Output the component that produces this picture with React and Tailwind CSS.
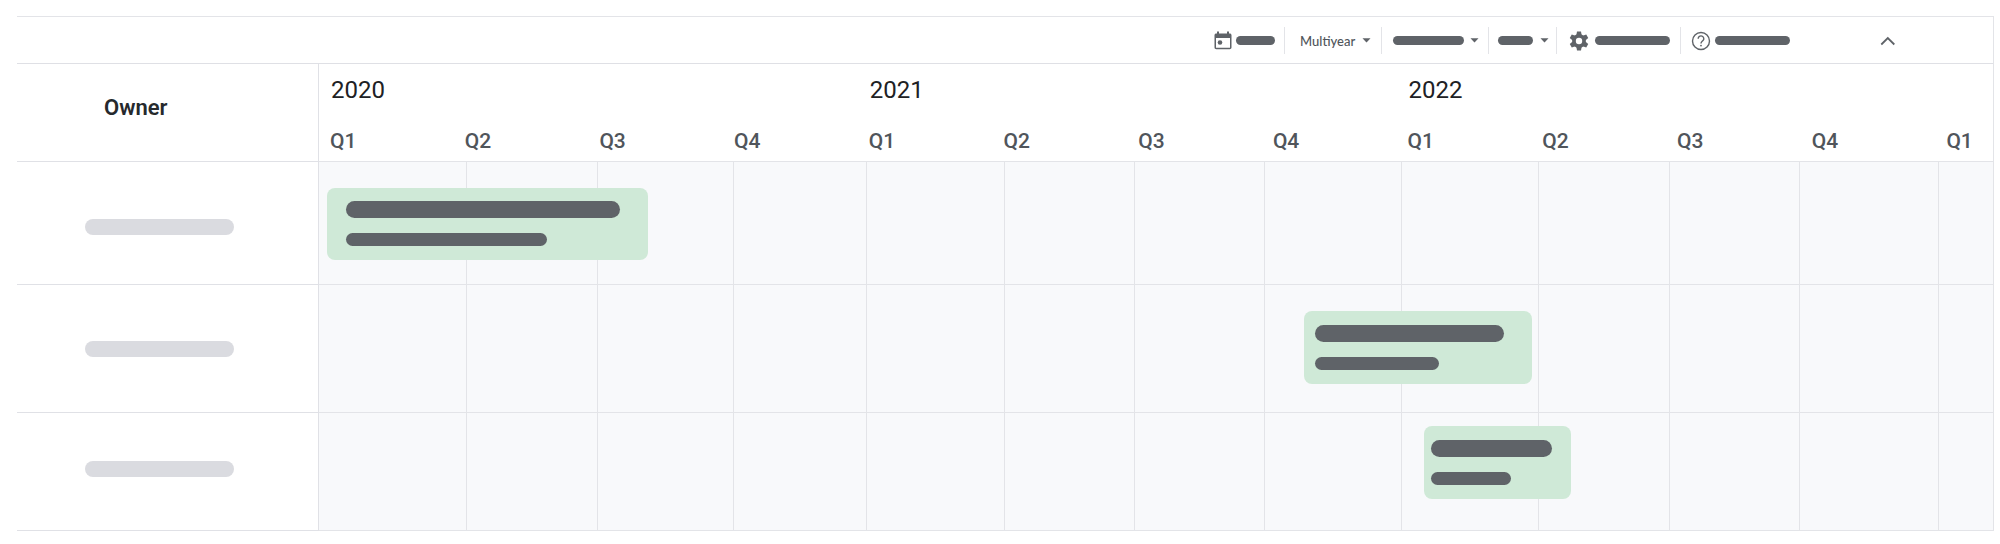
import React, { useState } from "react";

const TIMELINE_WIDTH = 1674;

const quarters = ["Q1", "Q2", "Q3", "Q4", "Q1", "Q2", "Q3", "Q4", "Q1", "Q2", "Q3", "Q4", "Q1"];

// start and length are in timeline units, see TIMELINE_WIDTH
const rows = [
  {
    id: 1,
    height: "h-[122px]",
    ownerPad: "pt-[57px]",
    bar: { start: 8, length: 321, className: "top-[26px] h-[72px] pt-[13px] pl-[19px]", title: "w-[274px]", detail: "w-[201px]" },
  },
  {
    id: 2,
    height: "h-[127px]",
    ownerPad: "pt-[56px]",
    bar: { start: 985, length: 228, className: "top-[26px] h-[73px] pt-3.5 pl-[11px]", title: "w-[189px]", detail: "w-[124px]" },
  },
  {
    id: 3,
    height: "h-[117px]",
    ownerPad: "pt-[48px]",
    bar: { start: 1105, length: 147, className: "top-[13px] h-[73px] pt-3.5 pl-[7px]", title: "w-[121px]", detail: "w-[80px]" },
  },
];

const toPercent = (value) => `${(value / TIMELINE_WIDTH) * 100}%`;

const Caret = () => (
  <svg className="w-[9px] h-[5px] shrink-0 pointer-events-none" viewBox="0 0 9 5" fill="#5f6368">
    <path d="M0.5 0.3h8L4.5 4.5z" />
  </svg>
);

const CalendarIcon = () => (
  <svg className="size-[22px] shrink-0" viewBox="0 0 22 22" fill="#5f6368">
    <path
      fillRule="evenodd"
      d="M5 1.500h2v2h8v-2h2v2h.7c1 0 1.800.7 1.800 1.600v12.400c0 1-.8 1.700-1.800 1.700H4.300c-1 0-1.800-.7-1.800-1.700V5.100c0-.9.8-1.600 1.800-1.600H5zM4 8v9.700h14V8z"
    />
    <circle cx="8" cy="12.500" r="2.300" />
  </svg>
);

const GearIcon = () => (
  <svg className="size-[22px] shrink-0" viewBox="0 0 22 22">
    <g fill="#5f6368">
      <circle cx="11" cy="11" r="6.900" />
      <path d="M9 1.500h4l.8 4.500H8.200zM9 20.500h4l.8-4.500H8.200z" />
      <path d="M9 1.500h4l.8 4.500H8.200zM9 20.500h4l.8-4.500H8.200z" transform="rotate(60 11 11)" />
      <path d="M9 1.500h4l.8 4.500H8.200zM9 20.500h4l.8-4.500H8.200z" transform="rotate(120 11 11)" />
    </g>
    <circle cx="11" cy="11" r="3.200" fill="#fff" />
  </svg>
);

const HelpIcon = () => (
  <svg className="size-[22px] shrink-0" viewBox="0 0 22 22" fill="none" stroke="#5f6368" strokeWidth="1.400">
    <circle cx="11" cy="11" r="8.500" />
    <path d="M8.200 8.700a2.800 2.700 0 1 1 4.800 1.800c-.9.9-2 1.400-2 3.100" />
    <circle cx="11" cy="15.600" r="0.900" fill="#5f6368" stroke="none" />
  </svg>
);

const Toolbar = () => {
  const [zoom, setZoom] = useState("multiyear");

  return (
    <div className="flex items-center justify-end h-[46px] pt-px pr-[93px]">
      <button aria-label="Today" className="flex items-center h-[27px] gap-0.5 pr-[9px] border-r border-[#e3e4e8]">
        <CalendarIcon />
        <span className="h-[9px] w-[39px] rounded-full bg-[#5f6368]" />
      </button>
      <div className="flex items-center h-[27px] gap-1.5 pl-[15px] pr-2.5 border-r border-[#e3e4e8]">
        <select
          aria-label="Zoom level"
          className="appearance-none bg-transparent font-[Lato,sans-serif] text-[13px] leading-5 font-medium text-[#50555b]"
          value={zoom}
          onChange={(e) => setZoom(e.target.value)}
        >
          <option value="multiyear">Multiyear</option>
        </select>
        <Caret />
      </div>
      <button aria-label="Group by" aria-haspopup="menu" className="flex items-center h-[27px] gap-1.5 pl-[11px] pr-[9px] border-r border-[#e3e4e8]">
        <span className="h-[9px] w-[71px] rounded-full bg-[#5f6368]" />
        <Caret />
      </button>
      <button aria-label="View" aria-haspopup="menu" className="flex items-center h-[27px] gap-[7px] pl-[9px] pr-[7px] border-r border-[#e3e4e8]">
        <span className="h-[9px] w-[35px] rounded-full bg-[#5f6368]" />
        <Caret />
      </button>
      <button aria-label="Settings" className="flex items-center h-[27px] gap-[5px] pl-[11px] pr-2.5 border-r border-[#e3e4e8]">
        <GearIcon />
        <span className="h-[9px] w-[75px] rounded-full bg-[#5f6368]" />
      </button>
      <button aria-label="Help" className="flex items-center h-[27px] gap-[3px] pl-[9px]">
        <HelpIcon />
        <span className="h-[9px] w-[75px] rounded-full bg-[#5f6368]" />
      </button>
      <button aria-label="Collapse" className="ml-[86px]">
        <svg className="size-6" viewBox="0 0 24 24" fill="none" stroke="#5f6368" strokeWidth="1.800">
          <path d="M5.300 15.500 11.800 9l6.500 6.500" />
        </svg>
      </button>
    </div>
  );
};

const TimelineHeader = () => (
  <div className="pt-3 pb-1.5">
    <div className="grid grid-cols-[repeat(12,1347fr)_576fr] text-2xl leading-7 font-normal text-[#202124]">
      <span className="col-span-4 pl-3">2020</span>
      <span className="col-span-4 pl-3">2021</span>
      <span className="col-span-4 pl-3">2022</span>
    </div>
    <div className="grid grid-cols-[repeat(12,1347fr)_576fr] mt-[23px] text-[21px] leading-7 font-medium text-[#50555b]">
      {quarters.map((quarter, i) => (
        <span key={i} className="pl-[11px]">
          {quarter}
        </span>
      ))}
    </div>
  </div>
);

const TimelineRow = ({ row }) => (
  <div className={`relative ${row.height}`}>
    <div className="grid h-full grid-cols-[148fr_131fr_136fr_133fr_138fr_130fr_130fr_137fr_137fr_131fr_130fr_139fr_54fr]">
      {quarters.map((_, i) => (
        <div key={i} className="border-r border-[#e3e4e8] last:border-r-0" />
      ))}
    </div>
    <div
      className={`absolute flex flex-col gap-[15px] rounded-lg bg-[#cfe9d7] ${row.bar.className}`}
      style={{ left: toPercent(row.bar.start), width: toPercent(row.bar.length) }}
    >
      <div className={`h-[17px] rounded-full bg-[#5f6368] ${row.bar.title}`} />
      <div className={`h-[13px] rounded-full bg-[#5f6368] ${row.bar.detail}`} />
    </div>
  </div>
);

const App = () => {
  return (
    <div className="min-h-screen bg-white pt-4 pl-[17px] pr-1.5 font-[Roboto,sans-serif]">
      <div className="border-t border-r border-[#e3e4e8]">
        <Toolbar />
        <table className="w-full table-fixed border-separate border-spacing-0 border-t border-[#dfe0e5]">
          <colgroup>
            <col className="w-[302px]" />
            <col />
          </colgroup>
          <thead>
            <tr>
              <th
                scope="col"
                className="p-0 pt-[30px] pl-[87px] align-top text-left text-[22px] leading-7 font-semibold text-[#26292d] border-b border-r border-[#e0e1e6]"
              >
                Owner
              </th>
              <th scope="col" className="p-0 text-left border-b border-[#e3e4e8]">
                <TimelineHeader />
              </th>
            </tr>
          </thead>
          <tbody>
            {rows.map((row) => (
              <tr key={row.id}>
                <th scope="row" className="p-0 align-top border-b border-r border-[#e0e1e6]">
                  <div className={`pl-[68px] ${row.ownerPad}`}>
                    <div className="h-4 w-[149px] rounded-full bg-[#dadbe0]" />
                  </div>
                </th>
                <td className="p-0 bg-[#f8f9fb] border-b border-[#e3e4e8]">
                  <TimelineRow row={row} />
                </td>
              </tr>
            ))}
          </tbody>
        </table>
      </div>
    </div>
  );
};

export default App;
